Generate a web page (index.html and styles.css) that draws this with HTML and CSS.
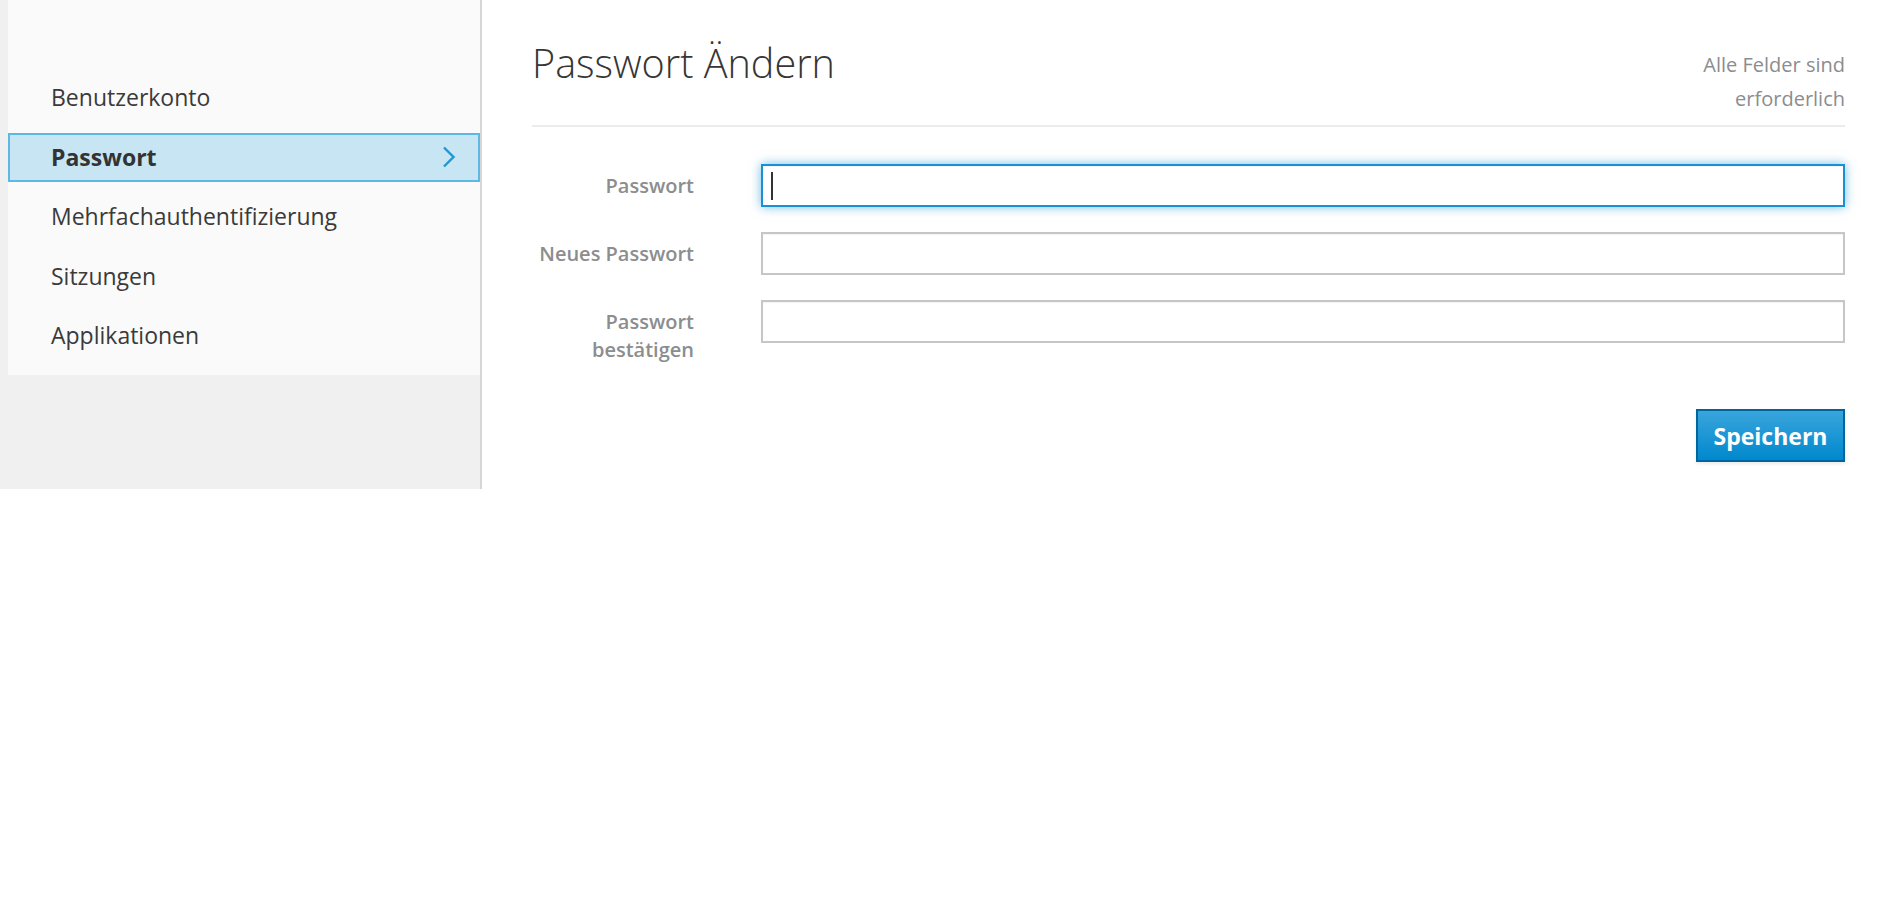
FILE: index.html
```html
<!DOCTYPE html>
<html lang="de">
<head>
<meta charset="utf-8">
<title>Passwort Ändern</title>
<link rel="stylesheet" href="styles.css">
</head>
<body>
<div class="layout">
  <aside class="sidebar">
    <ul class="nav">
      <li class="nav-item">Benutzerkonto</li>
      <li class="nav-item active">
        <span>Passwort</span>
        <svg class="chev" width="14" height="22" viewBox="0 0 14 22"><polyline points="2,1.5 11.5,11 2,20.5" fill="none" stroke="#1d97d6" stroke-width="2.4"/></svg>
      </li>
      <li class="nav-item">Mehrfachauthentifizierung</li>
      <li class="nav-item">Sitzungen</li>
      <li class="nav-item">Applikationen</li>
    </ul>
  </aside>
  <main class="content">
    <header class="page-head">
      <h1 class="title">Passwort Ändern</h1>
      <p class="subtitle">Alle Felder sind<br>erforderlich</p>
    </header>
    <form class="form">
      <div class="row">
        <label class="label">Passwort</label>
        <div class="field focus-field">
          <input class="input focused" type="password">
          <span class="caret"></span>
        </div>
      </div>
      <div class="row">
        <label class="label">Neues Passwort</label>
        <div class="field"><input class="input" type="password"></div>
      </div>
      <div class="row">
        <label class="label">Passwort<br>bestätigen</label>
        <div class="field"><input class="input" type="password"></div>
      </div>
      <div class="actions">
        <button class="btn" type="button">Speichern</button>
      </div>
    </form>
  </main>
</div>
</body>
</html>
```

FILE: styles.css
```css
* { box-sizing: border-box; }
html, body {
  margin: 0;
  padding: 0;
  background: #ffffff;
  font-family: "Open Sans", "Noto Sans", sans-serif;
  color: #363636;
}
.layout {
  display: flex;
  align-items: stretch;
}
.sidebar {
  width: 482px;
  flex: 0 0 482px;
  background: #f0f0f0;
  border-right: 2px solid #d6d6d6;
  padding-left: 8px;
}
.nav {
  list-style: none;
  margin: 0;
  padding: 73px 0 15px 0;
  background: #fafafa;
  display: flex;
  flex-direction: column;
  gap: 10.5px;
}
.nav-item {
  height: 49px;
  display: flex;
  align-items: center;
  justify-content: space-between;
  padding: 0 22px 0 41px;
  border: 2px solid transparent;
  font-size: 23px;
  line-height: 45px;
  color: #3a3a3a;
}
.nav-item.active {
  background: #c7e5f2;
  border-color: #5db9e3;
  font-weight: 700;
  color: #333;
}
.chev { display: block; }
.content {
  flex: 1;
  padding: 40px 45px 27px 50px;
}
.page-head {
  display: flex;
  justify-content: space-between;
  align-items: flex-start;
  border-bottom: 2px solid #ececec;
  padding-bottom: 9px;
}
.title {
  margin: 0.5px 0 0 0;
  font-size: 39.6px;
  font-weight: 300;
  line-height: 44px;
  color: #363636;
}
.subtitle {
  margin: 8px 0 0 0;
  font-size: 20px;
  line-height: 34px;
  color: #8b8d8f;
  text-align: right;
}
.form {
  margin-top: 37px;
}
.row {
  display: flex;
  align-items: flex-start;
  margin-bottom: 25px;
}
.label {
  width: 229px;
  flex: 0 0 229px;
  padding: 8px 67px 0 0;
  text-align: right;
  font-size: 20px;
  font-weight: 600;
  line-height: 28px;
  color: #8b8d8f;
}
.field {
  flex: 1;
  position: relative;
}
.input {
  display: block;
  width: 100%;
  height: 43px;
  border: 2px solid #c6c6c6;
  background: #fff;
  outline: none;
  padding: 0 10px;
  font-family: inherit;
  font-size: 20px;
  box-shadow: inset 0 1px 1px rgba(3,3,3,0.05);
}
.input.focused {
  border-color: #1a8fd6;
  box-shadow: inset 0 1px 1px rgba(3,3,3,0.05), 0 0 10px rgba(0,136,206,0.55);
}
.caret {
  position: absolute;
  left: 10px;
  top: 8px;
  width: 2px;
  height: 28px;
  background: #333;
}
.actions {
  display: flex;
  justify-content: flex-end;
  margin-top: 45px;
}
.btn {
  width: 149px;
  height: 53px;
  border: 2px solid #00659c;
  background: linear-gradient(#39a5dc, #0088ce);
  color: #fff;
  font-family: inherit;
  font-size: 23px;
  font-weight: 700;
  padding: 0;
  box-shadow: 0 2px 3px rgba(0,0,0,0.08);
}
```
